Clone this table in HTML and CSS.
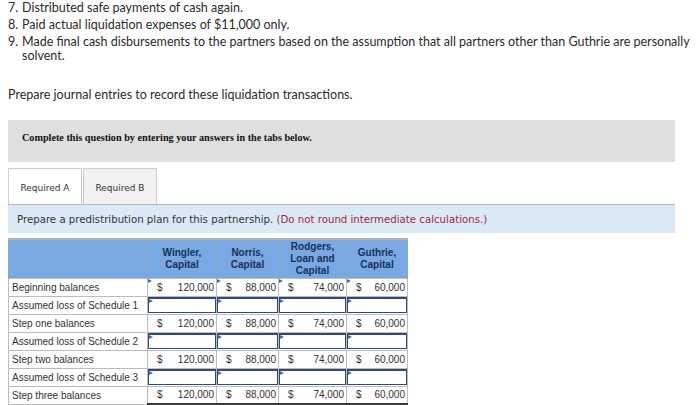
FILE: index.html
```html
<!DOCTYPE html>
<html>
<head>
<meta charset="utf-8">
<link rel="stylesheet" href="styles.css">
</head>
<body>
<div class="steps">
  <div class="step"><span class="num">7.</span><span class="txt">Distributed safe payments of cash again.</span></div>
  <div class="step"><span class="num">8.</span><span class="txt">Paid actual liquidation expenses of $11,000 only.</span></div>
  <div class="step"><span class="num">9.</span><span class="txt">Made final cash disbursements to the partners based on the assumption that all partners other than Guthrie are personally solvent.</span></div>
</div>
<p class="prompt">Prepare journal entries to record these liquidation transactions.</p>
<div class="notice">Complete this question by entering your answers in the tabs below.</div>
<div class="tabs">
  <div class="tab active">Required A</div>
  <div class="tab">Required B</div>
</div>
<div class="instr">Prepare a predistribution plan for this partnership. <span class="warn">(Do not round intermediate calculations.)</span></div>
<table class="plan">
  <colgroup>
    <col class="c-label"><col class="c-w"><col class="c-n"><col class="c-r"><col class="c-g">
  </colgroup>
  <thead>
    <tr>
      <th></th>
      <th>Wingler,<br>Capital</th>
      <th>Norris,<br>Capital</th>
      <th>Rodgers,<br>Loan and<br>Capital</th>
      <th>Guthrie,<br>Capital</th>
    </tr>
  </thead>
  <tbody>
    <tr>
      <td class="label">Beginning balances</td>
      <td class="val mark"><span>$</span><span>120,000</span></td>
      <td class="val mark"><span>$</span><span>88,000</span></td>
      <td class="val mark"><span>$</span><span>74,000</span></td>
      <td class="val mark"><span>$</span><span>60,000</span></td>
    </tr>
    <tr>
      <td class="label">Assumed loss of Schedule 1</td>
      <td class="in"><div class="box"></div></td>
      <td class="in"><div class="box"></div></td>
      <td class="in"><div class="box"></div></td>
      <td class="in"><div class="box"></div></td>
    </tr>
    <tr>
      <td class="label">Step one balances</td>
      <td class="val"><span>$</span><span>120,000</span></td>
      <td class="val"><span>$</span><span>88,000</span></td>
      <td class="val"><span>$</span><span>74,000</span></td>
      <td class="val"><span>$</span><span>60,000</span></td>
    </tr>
    <tr>
      <td class="label">Assumed loss of Schedule 2</td>
      <td class="in"><div class="box"></div></td>
      <td class="in"><div class="box"></div></td>
      <td class="in"><div class="box"></div></td>
      <td class="in"><div class="box"></div></td>
    </tr>
    <tr>
      <td class="label">Step two balances</td>
      <td class="val"><span>$</span><span>120,000</span></td>
      <td class="val"><span>$</span><span>88,000</span></td>
      <td class="val"><span>$</span><span>74,000</span></td>
      <td class="val"><span>$</span><span>60,000</span></td>
    </tr>
    <tr>
      <td class="label">Assumed loss of Schedule 3</td>
      <td class="in"><div class="box"></div></td>
      <td class="in"><div class="box"></div></td>
      <td class="in"><div class="box"></div></td>
      <td class="in"><div class="box"></div></td>
    </tr>
    <tr class="last">
      <td class="label">Step three balances</td>
      <td class="val"><span>$</span><span>120,000</span></td>
      <td class="val"><span>$</span><span>88,000</span></td>
      <td class="val"><span>$</span><span>74,000</span></td>
      <td class="val"><span>$</span><span>60,000</span></td>
    </tr>
  </tbody>
</table>
</body>
</html>
```

FILE: styles.css
```css
html, body {
  margin: 0;
  padding: 0;
  background: #fff;
}
body {
  padding: 0 8px;
  font-family: Lato, "Open Sans", sans-serif;
  color: #2b2b2b;
  overflow: hidden;
}
.steps {
  font-size: 12.5px;
  line-height: 14px;
  padding-top: 1px;
}
.step {
  display: flex;
  margin-bottom: 3px;
}
.num {
  flex: 0 0 14px;
}
.txt {
  flex: 1;
}
.prompt {
  margin: 25px 0 0;
  font-size: 12.5px;
  line-height: 14px;
}
.notice {
  margin-top: 18px;
  height: 42px;
  background: #dfdfdf;
  width: 667px;
  box-sizing: border-box;
  padding: 12px 0 0 14px;
  font-family: "Liberation Serif", serif;
  font-weight: bold;
  font-size: 10.2px;
  color: #111;
}
.tabs {
  display: flex;
  margin-top: 6px;
  height: 36px;
}
.tab {
  width: 74px;
  box-sizing: border-box;
  border: 1px solid #cfcfcf;
  border-bottom: none;
  background: #f1f1f1;
  font-family: "DejaVu Sans", Verdana, sans-serif;
  font-size: 9px;
  color: #333;
  display: flex;
  align-items: center;
  justify-content: center;
  margin-right: 1px;
  padding-top: 2px;
}
.tab.active {
  background: #fff;
}
.instr {
  width: 667px;
  box-sizing: border-box;
  height: 29px;
  background: #dbe9f7;
  border-top: 1px solid #a9bccf;
  padding: 9px 0 0 9px;
  font-family: "DejaVu Sans", Verdana, sans-serif;
  font-size: 10.2px;
  color: #333;
}
.warn {
  color: #a3283a;
}
.plan {
  margin-top: 5px;
  border-collapse: collapse;
  table-layout: fixed;
  width: 399px;
  font-family: "Liberation Sans", Arial, sans-serif;
  font-size: 10px;
}
.c-label { width: 139px; }
.c-w { width: 69px; }
.c-n { width: 62px; }
.c-r { width: 68px; }
.c-g { width: 61px; }
.plan th {
  height: 39px;
  box-sizing: border-box;
  padding: 0;
  background: #7aa8e3;
  border-top: 2px solid #a9b5c2;
  border-left: 1px solid #8fa4bd;
  border-right: 1px solid #8fa4bd;
  color: #17305a;
  font-weight: bold;
  font-size: 10px;
  line-height: 12px;
  text-align: center;
  vertical-align: middle;
}
.plan td {
  height: 18px;
  box-sizing: border-box;
  padding: 0;
  border: 1px solid #bdbdbd;
  color: #333;
  white-space: nowrap;
}
.plan td.label {
  padding-left: 3px;
  font-size: 10px;
}
.plan td.val {
  position: relative;
}
.val {
  padding: 0 2px 0 9px !important;
}
.val > span {
  display: inline-block;
}
.val span:first-child {
  float: left;
}
.val span:last-child {
  float: right;
}
.mark::before,
.box::before {
  content: "";
  position: absolute;
  left: 0;
  top: 0;
  border-style: solid;
  border-width: 2px 0 2px 4px;
  border-color: transparent transparent transparent #3a6fb5;
}
.plan td.in {
  border-color: #bdbdbd;
  padding: 0;
}
.box {
  position: relative;
  height: 16px;
  box-sizing: border-box;
  border: 1px solid #2e4b74;
  border-top-width: 2px;
  background: #fff;
}
.last td.val {
  border-bottom: 2px solid #3a3a3a;
}
```
